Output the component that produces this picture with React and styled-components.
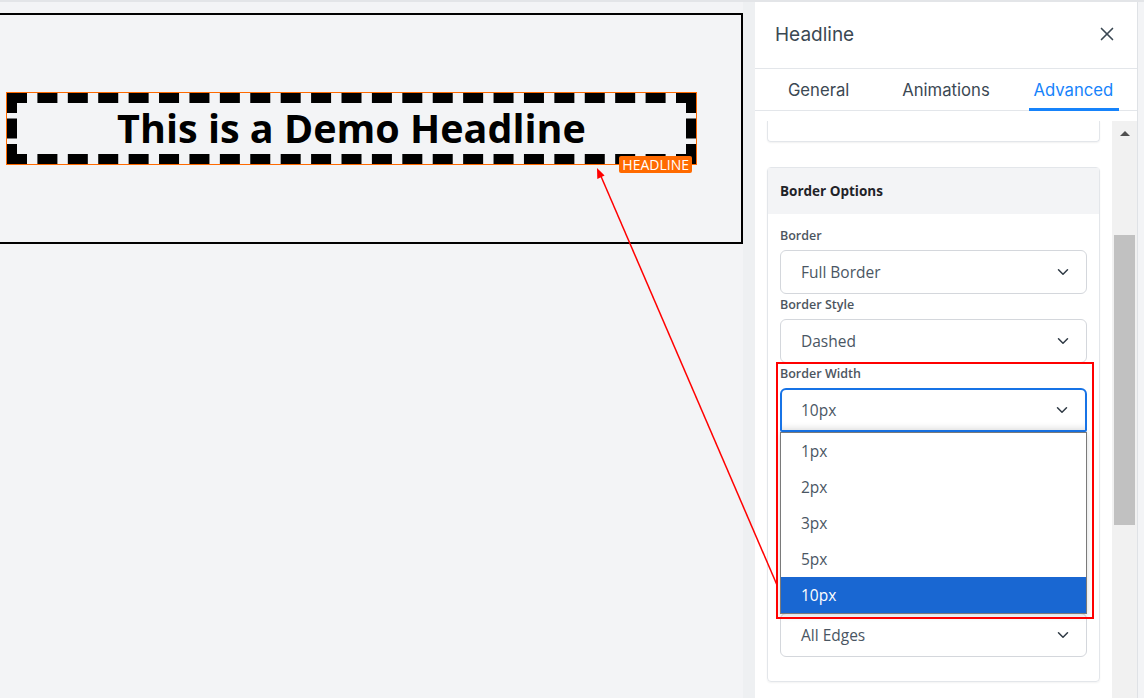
import styled, { createGlobalStyle } from 'styled-components'
import { ChevronDown, X } from 'lucide-react'

const GlobalStyle = createGlobalStyle`
    html, body {
        margin: 0;
        padding: 0;
        background: #f3f4f6;
        overflow: hidden;
    }
    * { box-sizing: border-box; }
`

const Page = styled.div`
    position: relative;
    display: grid;
    grid-template-columns: 743px 12px 383px 1fr;
    height: 698px;
    border-top: 2px solid #e3e5e8;
    font-family: "Open Sans", "Liberation Sans", sans-serif;
`

const Canvas = styled.div`
    background: #f3f4f6;
    padding-top: 11px;
    overflow: hidden;
`

const Stage = styled.div`
    margin-left: -2px;
    height: 231px;
    border: 2px solid #000;
    display: flex;
    align-items: center;
    padding: 0 44px 0 6px;
`

const HeadlineFrame = styled.div`
    position: relative;
    width: 100%;
    border: 1px solid #ff6a00;
`

const HeadlineText = styled.h1`
    margin: 0;
    height: 71px;
    border: 10px dashed #000;
    font-family: "Open Sans", sans-serif;
    font-weight: 700;
    font-size: 39.5px;
    line-height: 50px;
    text-align: center;
    color: #000;
`

const Badge = styled.span`
    position: absolute;
    right: 4px;
    bottom: -9px;
    background: #ff6a00;
    color: #fff;
    font-size: 14px;
    line-height: 17px;
    padding: 0 3px;
    border-radius: 2px;
`

const Gutter = styled.div`
    background: #eef0f2;
`

const Panel = styled.aside`
    background: #fff;
    display: flex;
    flex-direction: column;
    border-right: 1px solid #dfe2e6;
    min-height: 0;
`

const PanelHeader = styled.div`
    height: 67px;
    display: flex;
    align-items: center;
    justify-content: space-between;
    padding: 0 19px 2px 20px;
    border-bottom: 1px solid #e3e6ea;
    font-family: Inter, "Open Sans", sans-serif;
    font-size: 19px;
    color: #3b4853;
`

const CloseButton = styled.button`
    border: 0;
    background: none;
    padding: 0;
    display: flex;
    color: #3b4853;
`

const Tabs = styled.div`
    display: flex;
    height: 42px;
    border-bottom: 1px solid #e3e6ea;
`

const Tab = styled.div`
    position: relative;
    flex: 1;
    display: flex;
    align-items: center;
    justify-content: center;
    font-family: Inter, "Open Sans", sans-serif;
    font-size: 16.7px;
    color: ${({ $active }) => ($active ? '#1683fb' : '#3b4853')};

    &::after {
        content: '';
        display: ${({ $active }) => ($active ? 'block' : 'none')};
        position: absolute;
        bottom: -1px;
        left: 50%;
        width: 90px;
        margin-left: -44px;
        height: 3px;
        background: #1683fb;
    }
`

const PanelBody = styled.div`
    flex: 1;
    display: flex;
    margin-top: 10px;
    min-height: 0;
`

const Content = styled.div`
    flex: 1;
    padding: 0 12px;
    display: flex;
    flex-direction: column;
    gap: 25px;
    overflow: hidden;
`

const PrevCard = styled.div`
    height: 21px;
    flex-shrink: 0;
    border: 1px solid #e3e6ea;
    border-top: 0;
    border-radius: 0 0 4px 4px;
    box-shadow: 0 1px 2px rgba(0, 0, 0, 0.06);
`

const Card = styled.section`
    flex-shrink: 0;
    border: 1px solid #e3e6ea;
    border-radius: 4px;
    box-shadow: 0 1px 2px rgba(0, 0, 0, 0.05);
`

const CardHeader = styled.div`
    height: 46px;
    display: flex;
    align-items: center;
    padding: 0 12px;
    background: #f3f4f6;
    font-size: 13.5px;
    font-weight: 700;
    color: #1f2328;
`

const CardBody = styled.div`
    padding: 12px 12px 24px;
    display: flex;
    flex-direction: column;
    gap: 1px;
`

const Field = styled.div`
    display: flex;
    flex-direction: column;
`

const Label = styled.label`
    font-size: 12.5px;
    font-weight: 600;
    line-height: 20px;
    margin-bottom: 4px;
    color: #4d5560;
`

const Select = styled.div`
    height: 44px;
    display: flex;
    align-items: center;
    justify-content: space-between;
    padding: 0 14px 0 ${({ $focused }) => ($focused ? 19 : 20)}px;
    border: ${({ $focused }) => ($focused ? '2px solid #1773e6' : '1px solid #d4d7dc')};
    border-radius: ${({ $focused }) => ($focused ? '6px 6px 2px 2px' : '6px')};
    font-size: 15.5px;
    color: #4a5663;
    background: #fff;
    box-shadow: ${({ $focused }) => ($focused ? 'inset 0 -6px 6px -4px rgba(0,0,0,0.12)' : 'none')};
`

/* open list of the focused select; the field below it is covered up to its box */
const Dropdown = styled.ul`
    position: relative;
    z-index: 2;
    margin: 0 0 -2px;
    padding: 0;
    list-style: none;
    background: #fff;
    border: 1px solid #7a7a7a;
    box-shadow: 0 2px 6px rgba(0, 0, 0, 0.15);
`

const Option = styled.li`
    height: 36px;
    display: flex;
    align-items: center;
    padding-left: 20px;
    font-size: 15.5px;
    color: ${({ $selected }) => ($selected ? '#fff' : '#4a5663')};
    background: ${({ $selected }) => ($selected ? '#1967d2' : 'transparent')};
`

const Scrollbar = styled.div`
    width: 25px;
    background: #f1f1f1;
    display: flex;
    flex-direction: column;
    align-items: center;
    padding-top: 10px;
`

const ArrowUp = styled.div`
    width: 0;
    height: 0;
    border-left: 5px solid transparent;
    border-right: 5px solid transparent;
    border-bottom: 5px solid #505050;
`

const Thumb = styled.div`
    margin-top: 99px;
    width: 21px;
    height: 290px;
    background: #c1c1c1;
`

const Highlight = styled.div`
    position: absolute;
    left: 776px;
    top: 360px;
    width: 318px;
    height: 257px;
    border: 2px solid #ff0000;
    pointer-events: none;
    z-index: 3;
`

const ArrowLayer = styled.svg`
    position: absolute;
    left: 0;
    top: -2px;
    pointer-events: none;
    z-index: 3;
`

const fields = [
    { label: 'Border', value: 'Full Border' },
    { label: 'Border Style', value: 'Dashed' },
]

const widths = ['1px', '2px', '3px', '5px', '10px']

function App() {
    return (
        <>
            <GlobalStyle />
            <Page>
                <Canvas>
                    <Stage>
                        <HeadlineFrame>
                            <HeadlineText>This is a Demo Headline</HeadlineText>
                            <Badge>HEADLINE</Badge>
                        </HeadlineFrame>
                    </Stage>
                </Canvas>
                <Gutter />
                <Panel>
                    <PanelHeader>
                        <span>Headline</span>
                        <CloseButton><X size={22} strokeWidth={1.8} /></CloseButton>
                    </PanelHeader>
                    <Tabs>
                        <Tab>General</Tab>
                        <Tab>Animations</Tab>
                        <Tab $active>Advanced</Tab>
                    </Tabs>
                    <PanelBody>
                        <Content>
                            <PrevCard />
                            <Card>
                                <CardHeader>Border Options</CardHeader>
                                <CardBody>
                                    {fields.map((f) => (
                                        <Field key={f.label}>
                                            <Label>{f.label}</Label>
                                            <Select>
                                                {f.value}
                                                <ChevronDown size={18} strokeWidth={2} color="#2f3a45" />
                                            </Select>
                                        </Field>
                                    ))}
                                    <Field>
                                        <Label>Border Width</Label>
                                        <Select $focused>
                                            10px
                                            <ChevronDown size={18} strokeWidth={2} color="#2f3a45" />
                                        </Select>
                                        <Dropdown>
                                            {widths.map((w) => (
                                                <Option key={w} $selected={w === '10px'}>{w}</Option>
                                            ))}
                                        </Dropdown>
                                    </Field>
                                    <Field>
                                        <Select>
                                            All Edges
                                            <ChevronDown size={18} strokeWidth={2} color="#2f3a45" />
                                        </Select>
                                    </Field>
                                </CardBody>
                            </Card>
                        </Content>
                        <Scrollbar>
                            <ArrowUp />
                            <Thumb />
                        </Scrollbar>
                    </PanelBody>
                </Panel>
                <div />
                <ArrowLayer width="1144" height="698">
                    <line x1="777" y1="585" x2="600" y2="174" stroke="#ff0000" strokeWidth="1.5" />
                    <polygon points="597,168 597.3,179 604.6,175.6" fill="#ff0000" />
                </ArrowLayer>
                <Highlight />
            </Page>
        </>
    )
}

export default App
